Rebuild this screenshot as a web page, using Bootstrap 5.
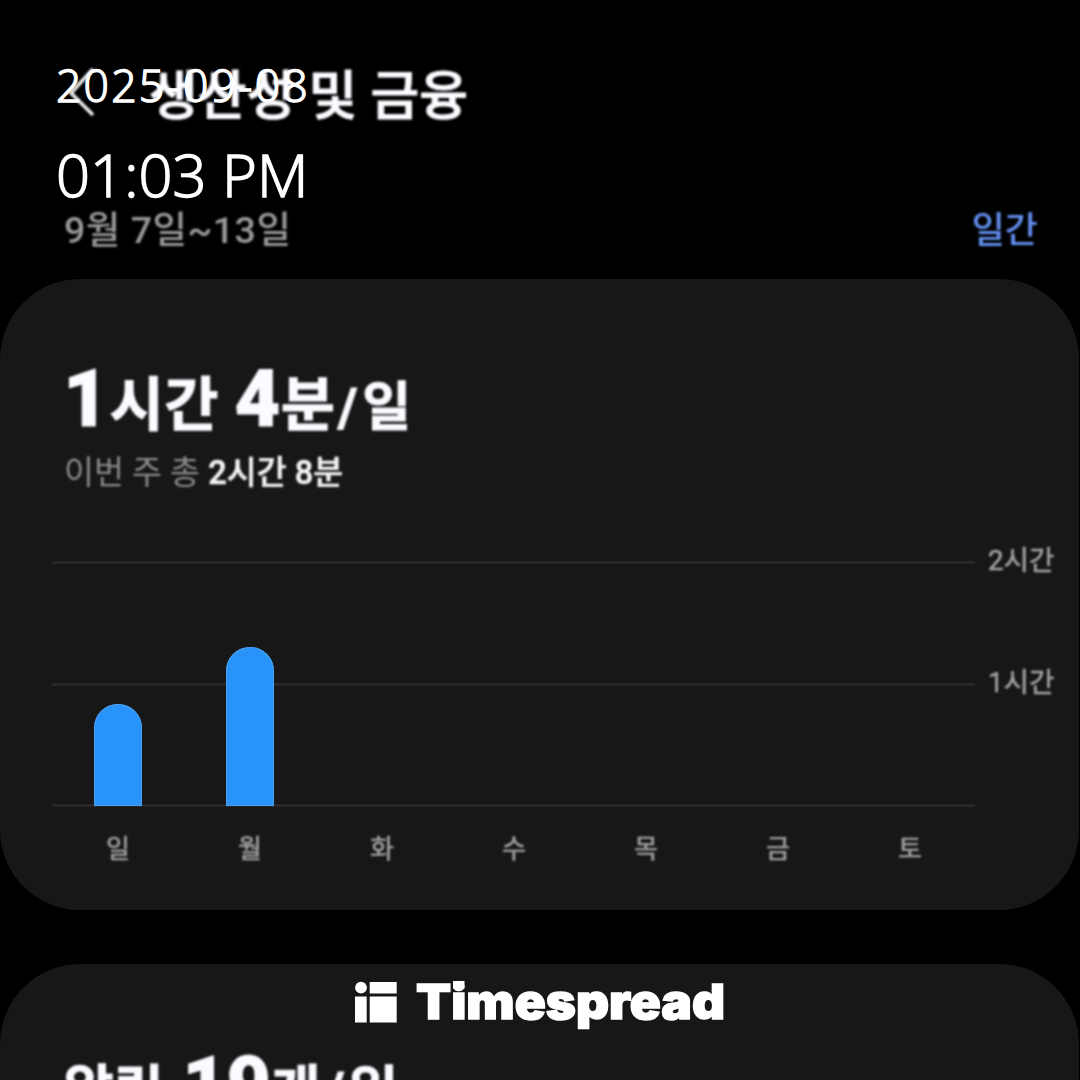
<!DOCTYPE html>
<html lang="ko">
<head>
<meta charset="utf-8">
<meta name="viewport" content="width=device-width, initial-scale=1">
<title>Timespread</title>
<link href="https://cdn.jsdelivr.net/npm/bootstrap@5.3.0/dist/css/bootstrap.min.css" rel="stylesheet">
<style>
body{background:#000;color:#fafaff;font-family:Roboto,"Noto Sans CJK KR",sans-serif;width:1080px;height:1080px;overflow:hidden}
.screen{width:1080px;height:1080px;overflow:hidden;white-space:nowrap}
.soft{filter:blur(.8px)}
.topbar{height:190px;padding:65px 0 0 64px}
.topbar h1{font-size:53px;line-height:60px;font-weight:500;margin:2px 0 0 48px;-webkit-text-stroke:1.1px #fafaff}
.back-arrow{width:37px;height:60px}
.period{height:89px;padding:18px 42px 0 64px;font-size:37.5px;line-height:44px;font-weight:500}
.period-range{color:#98989b;letter-spacing:.5px}
.period-mode{color:#6490f2;font-size:36px;padding-top:1px}
.panel{background:#171717;border-radius:80px;flex:none;width:1079px}
.usage{height:631px;margin-bottom:54px;padding-top:81px}
.total{font-size:59px;font-weight:700;line-height:80px;height:80px;padding-left:63px;letter-spacing:.6px;-webkit-text-stroke:1px #fafaff}
.total b{font-size:79px;line-height:1}
.total .unit{font-size:53px;letter-spacing:5px;margin-left:2px}
.alerts{font-size:54px;letter-spacing:.2px;padding-left:64px;margin-top:1px}
.alerts b{font-size:76px;margin-left:5px}
.alerts .unit{margin-left:4px}
.week{font-size:32.6px;line-height:44px;height:60px;padding-left:64px;margin-top:11px;color:#8c8c8e}
.week b{color:#f5f5f7;font-weight:500;-webkit-text-stroke:.6px #f5f5f7}
.chart{height:246px;margin:50px 0 0 52px}
.plot{width:923px;height:246px}
.gridline{height:3px;background:#272727}
.bars{inset:0 0 1px 0}
.slot{width:132px;flex:none}
.bar{width:48px;border-radius:24px 24px 0 0;background:#2893f8;box-shadow:inset 0 0 0 1px #4c9fee}
.axis{font-size:27.6px;line-height:30px;color:#a6a6a8;padding-left:13px;margin-top:-15px;-webkit-text-stroke:.5px #a6a6a8}
.axis div{height:122px}
.days{margin:22px 0 0 52px;font-size:26px;line-height:40px;color:#a6a6a8;-webkit-text-stroke:.5px #a6a6a8}
.stamp{left:56px;top:58px;color:#fff;font-family:"Open Sans","Noto Sans",sans-serif;font-weight:300;-webkit-text-stroke:1.5px #fff}
.stamp-date{font-size:44.5px;line-height:54px;letter-spacing:2.2px}
.stamp-time{font-size:59.5px;line-height:70px;margin-top:27px;letter-spacing:.1px}
.brand{left:355px;top:976px}
</style>
<script src="https://cdn.jsdelivr.net/npm/bootstrap@5.3.0/dist/js/bootstrap.bundle.min.js"></script>
</head>
<body>
<main class="screen position-relative d-flex flex-column">
  <header class="topbar d-flex align-items-start flex-shrink-0 soft">
    <svg class="back-arrow" viewBox="0 0 37 60" fill="none" stroke="#eee" stroke-width="3.6"><path d="M29 4 7 28 29 50"/></svg>
    <h1>생산성 및 금융</h1>
  </header>
  <div class="period d-flex justify-content-between flex-shrink-0 soft">
    <span class="period-range">9월 7일~13일</span><span class="period-mode">일간</span>
  </div>
  <section class="panel usage">
    <div class="total soft"><b>1</b>시간 <b>4</b>분<span class="unit">/일</span></div>
    <div class="week soft">이번 주 총 <b>2시간 8분</b></div>
    <div class="chart d-flex">
      <div class="plot position-relative d-flex flex-column justify-content-between">
        <div class="gridline"></div><div class="gridline"></div><div class="gridline"></div>
        <div class="bars position-absolute d-flex align-items-end">
          <div class="slot d-flex justify-content-center"><div class="bar" style="height:102px"></div></div>
          <div class="slot d-flex justify-content-center"><div class="bar" style="height:159px"></div></div>
        </div>
      </div>
      <div class="axis soft"><div>2시간</div><div>1시간</div></div>
    </div>
    <div class="days d-flex text-center soft">
      <div class="slot">일</div><div class="slot">월</div><div class="slot">화</div><div class="slot">수</div><div class="slot">목</div><div class="slot">금</div><div class="slot">토</div>
    </div>
  </section>
  <section class="panel usage">
    <div class="total alerts soft">알림 <b>19</b>개<span class="unit">/일</span></div>
  </section>
  <div class="stamp position-absolute">
    <div class="stamp-date">2025-09-08</div>
    <div class="stamp-time">01:03 PM</div>
  </div>
  <svg class="brand position-absolute" width="372" height="54" viewBox="0 0 372 54" fill="#fff">
    <circle cx="6" cy="11.7" r="5.9"/><path d="M14.7 6H41.7V17.4H14.7zM0 20.4H11.7V46.5H0zM14.7 20.4H41.7V46.5H14.7z"/>
    <text x="61" y="42.5" font-family="Inter,sans-serif" font-weight="900" font-size="48" stroke="#fff" stroke-width="1.4" textLength="309" lengthAdjust="spacingAndGlyphs">Timespread</text>
    <path d="M98 5h11.500v7.500H98z"/>
  </svg>
</main>
</body>
</html>
